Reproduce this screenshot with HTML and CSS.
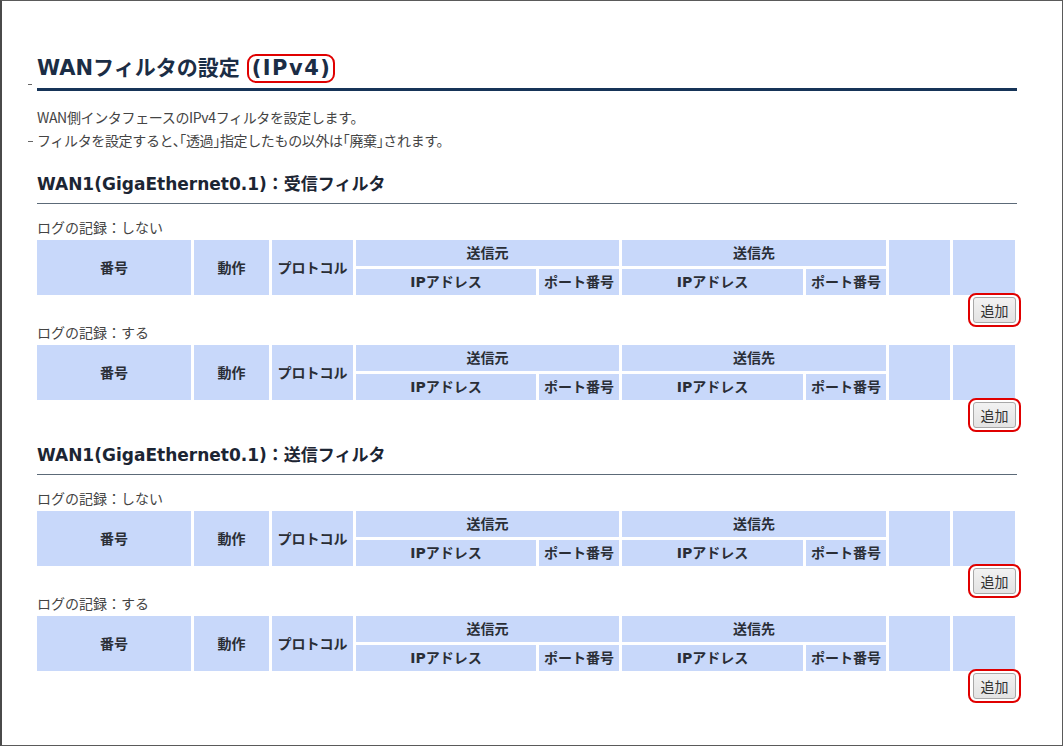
FILE: index.html
```html
<!DOCTYPE html>
<html lang="ja">
<head>
<meta charset="utf-8">
<title>WANフィルタの設定 (IPv4)</title>
<link rel="stylesheet" href="styles.css">
</head>
<body>
<div class="frame">
  <h1 class="title">WANフィルタの設定<span class="mark">(IPv4)</span></h1>
  <div class="desc">
    <p>WAN側インタフェースのIPv4フィルタを設定します。</p>
    <p class="dash">フィルタを設定すると、「透過」指定したもの以外は「廃棄」されます。</p>
  </div>

  <section class="sec">
    <h2 class="sec-title">WAN1(GigaEthernet0.1)：受信フィルタ</h2>
    <div class="block">
      <div class="log">ログの記録：しない</div>
      <table class="ftable">
        <colgroup><col class="c1"><col class="c2"><col class="c3"><col class="c4"><col class="c5"><col class="c6"><col class="c7"><col class="c8"><col class="c9"></colgroup>
        <tr><th rowspan="2">番号</th><th rowspan="2">動作</th><th rowspan="2">プロトコル</th><th colspan="2">送信元</th><th colspan="2">送信先</th><th rowspan="2"></th><th rowspan="2"></th></tr>
        <tr><th>IPアドレス</th><th>ポート番号</th><th>IPアドレス</th><th>ポート番号</th></tr>
      </table>
      <div class="actions"><button class="btn">追加</button></div>
    </div>
    <div class="block">
      <div class="log">ログの記録：する</div>
      <table class="ftable">
        <colgroup><col class="c1"><col class="c2"><col class="c3"><col class="c4"><col class="c5"><col class="c6"><col class="c7"><col class="c8"><col class="c9"></colgroup>
        <tr><th rowspan="2">番号</th><th rowspan="2">動作</th><th rowspan="2">プロトコル</th><th colspan="2">送信元</th><th colspan="2">送信先</th><th rowspan="2"></th><th rowspan="2"></th></tr>
        <tr><th>IPアドレス</th><th>ポート番号</th><th>IPアドレス</th><th>ポート番号</th></tr>
      </table>
      <div class="actions"><button class="btn">追加</button></div>
    </div>
  </section>

  <section class="sec">
    <h2 class="sec-title">WAN1(GigaEthernet0.1)：送信フィルタ</h2>
    <div class="block">
      <div class="log">ログの記録：しない</div>
      <table class="ftable">
        <colgroup><col class="c1"><col class="c2"><col class="c3"><col class="c4"><col class="c5"><col class="c6"><col class="c7"><col class="c8"><col class="c9"></colgroup>
        <tr><th rowspan="2">番号</th><th rowspan="2">動作</th><th rowspan="2">プロトコル</th><th colspan="2">送信元</th><th colspan="2">送信先</th><th rowspan="2"></th><th rowspan="2"></th></tr>
        <tr><th>IPアドレス</th><th>ポート番号</th><th>IPアドレス</th><th>ポート番号</th></tr>
      </table>
      <div class="actions"><button class="btn">追加</button></div>
    </div>
    <div class="block">
      <div class="log">ログの記録：する</div>
      <table class="ftable">
        <colgroup><col class="c1"><col class="c2"><col class="c3"><col class="c4"><col class="c5"><col class="c6"><col class="c7"><col class="c8"><col class="c9"></colgroup>
        <tr><th rowspan="2">番号</th><th rowspan="2">動作</th><th rowspan="2">プロトコル</th><th colspan="2">送信元</th><th colspan="2">送信先</th><th rowspan="2"></th><th rowspan="2"></th></tr>
        <tr><th>IPアドレス</th><th>ポート番号</th><th>IPアドレス</th><th>ポート番号</th></tr>
      </table>
      <div class="actions"><button class="btn">追加</button></div>
    </div>
  </section>
</div>
</body>
</html>
```
FILE: styles.css
```css
html, body {
  margin: 0;
  padding: 0;
  background: #fff;
}

.frame {
  box-sizing: border-box;
  width: 1063px;
  height: 746px;
  border: 1px solid #5a5a5a;
  border-left: 2px solid #4a4a4a;
  padding: 52px 45px 0 35px;
  font-family: "DejaVu Sans", "Noto Sans CJK JP", sans-serif;
  color: #444;
  overflow: hidden;
}

.title {
  position: relative;
  box-sizing: content-box;
  height: 30px;
  margin: 0;
  font-size: 21px;
  line-height: 30px;
  font-weight: bold;
  color: #1b2d45;
  padding-bottom: 5px;
  border-bottom: 3px solid #163458;
}

.title::before {
  content: "";
  position: absolute;
  left: -9px;
  bottom: 3px;
  width: 4px;
  height: 1px;
  background: #666;
}

.mark {
  position: relative;
  margin-left: 12px;
  letter-spacing: 1.5px;
}

.mark::after {
  content: "";
  position: absolute;
  left: -5px;
  right: -4px;
  top: -2px;
  bottom: -3px;
  border: 2px solid #e00000;
  border-radius: 9px;
}

.desc {
  margin-top: 15px;
  height: 46px;
}

.desc p {
  position: relative;
  height: 23px;
  margin: 0;
  font-family: "Noto Sans CJK JP", sans-serif;
  font-size: 14px;
  line-height: 23px;
  color: #444;
  font-feature-settings: "halt";
  letter-spacing: -0.35px;
}

.desc .dash::before {
  content: "";
  position: absolute;
  left: -9px;
  top: 12px;
  width: 5px;
  height: 1px;
  background: #666;
}

.sec-title {
  box-sizing: content-box;
  height: 26px;
  margin: 19px 0 0;
  font-size: 17px;
  line-height: 26px;
  font-weight: bold;
  color: #1c2533;
  padding-bottom: 6px;
  border-bottom: 1px solid #5c6a78;
}

.sec + .sec .sec-title {
  margin-top: 14px;
}

.log {
  height: 20px;
  margin-top: 13px;
  font-family: "Noto Sans CJK JP", sans-serif;
  font-size: 14px;
  line-height: 20px;
  color: #444;
}

.block + .block .log {
  margin-top: -1px;
}

.ftable {
  border-collapse: separate;
  border-spacing: 3px;
  margin: 0 -3px;
  table-layout: fixed;
  width: 984px;
}

.c1 { width: 154px; }
.c2 { width: 75px; }
.c3 { width: 81px; }
.c4 { width: 180px; }
.c5 { width: 80px; }
.c6 { width: 181px; }
.c7 { width: 80px; }
.c8 { width: 61px; }
.c9 { width: 62px; }

.ftable th {
  box-sizing: border-box;
  background: #c8d8fa;
  height: 26px;
  padding: 0;
  font-size: 14px;
  line-height: 20px;
  font-weight: bold;
  color: #2a2e36;
  text-align: center;
  vertical-align: middle;
}

.actions {
  display: flex;
  justify-content: flex-end;
  height: 26px;
  margin-top: -1px;
  padding-right: 1px;
}

.btn {
  position: relative;
  box-sizing: border-box;
  width: 43px;
  height: 26px;
  padding: 0;
  font-family: "Noto Sans CJK JP", sans-serif;
  font-size: 14px;
  color: #333;
  background: linear-gradient(#f2f2f2, #e3e3e3);
  border: 1px solid #a8a8a8;
  border-radius: 3px;
}

.btn::after {
  content: "";
  position: absolute;
  left: -6px;
  right: -6px;
  top: -5px;
  bottom: -5px;
  border: 2px solid #e00000;
  border-radius: 8px;
}
```
